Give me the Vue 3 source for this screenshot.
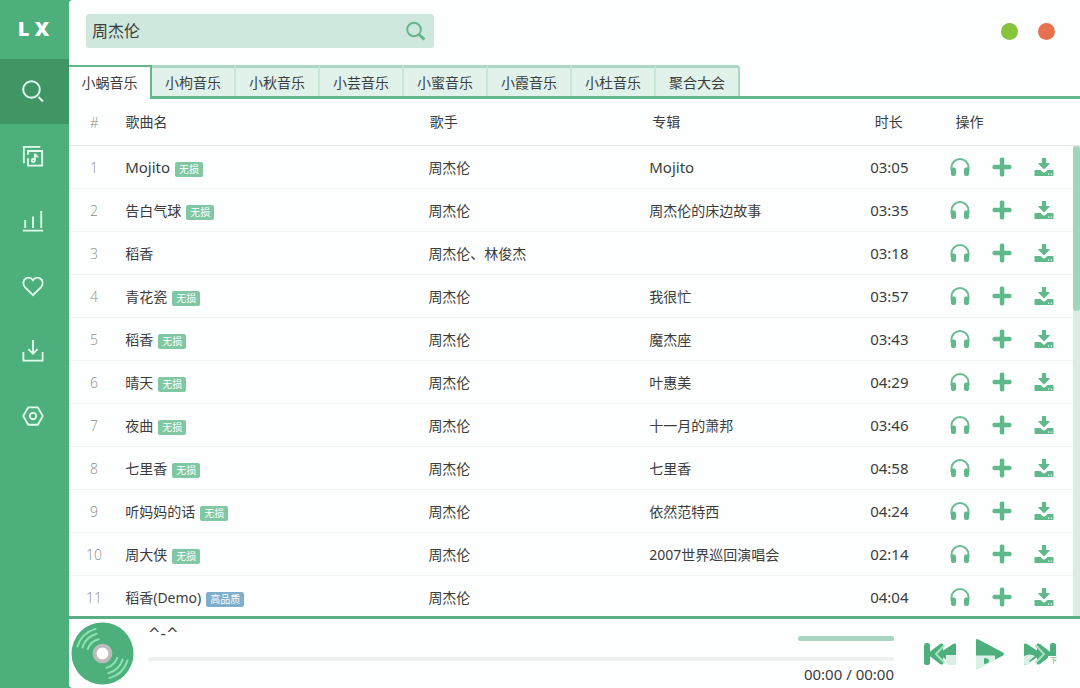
<script setup>
import { ref } from 'vue'

const keyword = ref('周杰伦')
const activeTab = ref(0)
const tabs = ['小蜗音乐', '小枸音乐', '小秋音乐', '小芸音乐', '小蜜音乐', '小霞音乐', '小杜音乐', '聚合大会']

const songs = [
  { name: 'Mojito', tag: '无损', artist: '周杰伦', album: 'Mojito', time: '03:05' },
  { name: '告白气球', tag: '无损', artist: '周杰伦', album: '周杰伦的床边故事', time: '03:35' },
  { name: '稻香', tag: '', artist: '周杰伦、林俊杰', album: '', time: '03:18' },
  { name: '青花瓷', tag: '无损', artist: '周杰伦', album: '我很忙', time: '03:57' },
  { name: '稻香', tag: '无损', artist: '周杰伦', album: '魔杰座', time: '03:43' },
  { name: '晴天', tag: '无损', artist: '周杰伦', album: '叶惠美', time: '04:29' },
  { name: '夜曲', tag: '无损', artist: '周杰伦', album: '十一月的萧邦', time: '03:46' },
  { name: '七里香', tag: '无损', artist: '周杰伦', album: '七里香', time: '04:58' },
  { name: '听妈妈的话', tag: '无损', artist: '周杰伦', album: '依然范特西', time: '04:24' },
  { name: '周大侠', tag: '无损', artist: '周杰伦', album: '2007世界巡回演唱会', time: '02:14' },
  { name: '稻香(Demo)', tag: '高品质', artist: '周杰伦', album: '', time: '04:04' },
]

const isLatin = (text) => /^[\w ]+$/.test(text)
</script>

<template>
  <div class="app">
    <aside class="side">
      <div class="logo">L X</div>
      <nav class="nav">
        <button class="nav-item active" aria-label="搜索">
          <svg viewBox="0 0 22 22"><circle cx="9.500" cy="9.500" r="8.300" /><path d="M16.500 17l4.500 4.500" /></svg>
        </button>
        <button class="nav-item" aria-label="歌单">
          <svg viewBox="0 0 24 24">
            <path d="M2 20V2h18M6.500 10.500V6.500h15.500v16H6.500v-8" />
            <path d="M14 17V9.500c.4 2 3 2 3 4" /><circle cx="12.300" cy="17" r="1.700" />
          </svg>
        </button>
        <button class="nav-item" aria-label="排行榜">
          <svg viewBox="0 0 24 24"><path d="M1 22.500h22M3.500 19.500V11M12 19.500V7M21 19.500V1" /></svg>
        </button>
        <button class="nav-item" aria-label="收藏">
          <svg viewBox="0 0 24 24"><path d="M12 22L3.400 13.500C.3 10.200 1.100 5.300 4.300 3.700C7.200 2.300 10.300 3.200 12 5.700C13.700 3.200 16.800 2.300 19.700 3.700C22.900 5.300 23.700 10.200 20.600 13.500Z" /></svg>
        </button>
        <button class="nav-item" aria-label="下载">
          <svg viewBox="0 0 24 24"><path d="M1.500 13v9.500h21V13M12 0v14M7 10L12 15l5-5" /></svg>
        </button>
        <button class="nav-item" aria-label="设置">
          <svg viewBox="0 0 24 24"><path d="M6.800 2.500h10.400L22.700 12l-5.500 9.500H6.800L1.300 12Z" /><circle cx="12" cy="12" r="3.500" /></svg>
        </button>
      </nav>
    </aside>

    <main class="main">
      <header class="toolbar">
        <form class="search" @submit.prevent>
          <input v-model="keyword" type="text" aria-label="搜索歌曲" />
          <button class="search-btn" aria-label="搜索">
            <svg viewBox="0 0 20 20"><circle cx="8" cy="8.500" r="6.800" /><path class="handle" d="M13 13.500l5.500 5" /></svg>
          </button>
        </form>
        <div class="window-btns">
          <button class="dot min" aria-label="最小化"></button>
          <button class="dot close" aria-label="关闭"></button>
        </div>
      </header>

      <div class="tabs">
        <button
          v-for="(tab, i) in tabs"
          :key="tab"
          class="tab"
          :class="{ active: i === activeTab }"
          @click="activeTab = i"
        >{{ tab }}</button>
      </div>

      <table class="head">
        <colgroup><col class="c-no" /><col class="c-name" /><col class="c-artist" /><col class="c-album" /><col class="c-time" /><col /></colgroup>
        <thead>
          <tr><th class="no">#</th><th>歌曲名</th><th>歌手</th><th>专辑</th><th>时长</th><th>操作</th></tr>
        </thead>
      </table>

      <div class="list">
        <div class="rows">
          <table>
            <colgroup><col class="c-no" /><col class="c-name" /><col class="c-artist" /><col class="c-album" /><col class="c-time" /><col /></colgroup>
            <tbody>
              <tr v-for="(s, i) in songs" :key="i">
                <td class="no">{{ i + 1 }}</td>
                <td><span :class="{ latin: isLatin(s.name) }">{{ s.name }}</span><span v-if="s.tag" class="tag" :class="{ hq: s.tag === '高品质' }">{{ s.tag }}</span></td>
                <td>{{ s.artist }}</td>
                <td :class="{ latin: isLatin(s.album) }">{{ s.album }}</td>
                <td class="latin">{{ s.time }}</td>
                <td>
                  <div class="actions">
                    <button aria-label="试听">
                      <svg viewBox="0 0 20 20">
                        <path class="band" d="M1.500 14V10.500a8.500 8.500 0 0 1 17 0V14" />
                        <rect x="1" y="10.500" width="5" height="8.500" rx="2" /><rect x="14" y="10.500" width="5" height="8.500" rx="2" />
                      </svg>
                    </button>
                    <button aria-label="添加">
                      <svg viewBox="0 0 20 20"><rect x="7.800" y="0.500" width="4.500" height="19" rx="1.800" /><rect x="0.500" y="7.800" width="19" height="4.500" rx="1.800" /></svg>
                    </button>
                    <button aria-label="下载">
                      <svg viewBox="0 0 20 20"><path fill-rule="evenodd" d="M8.500 1h3q.6 0 .6.600V6h3.200q.9 0 .3.700L10.500 12q-.5.500-1 0L4.400 6.700Q3.800 6 4.700 6H7.900V1.600Q7.900 1 8.500 1ZM1.300 13H6.500l2.200 2q1.300 1 2.600 0l2.200-2h5.200q.8 0 .8.800v4.400q0 .8-.8.800H1.300q-.8 0-.8-.8v-4.400q0-.8.8-.8ZM14 16.500v1.200h1.200v-1.200ZM16.700 16.500v1.200h1.200v-1.200Z" /></svg>
                    </button>
                  </div>
                </td>
              </tr>
            </tbody>
          </table>
        </div>
        <div class="track"><div class="thumb"></div></div>
      </div>

      <footer class="player">
        <svg class="disc" viewBox="0 0 64 64">
          <circle cx="32" cy="32" r="31.500" fill="#4daf7c" />
          <g fill="none" stroke="#8fe0b4" stroke-width="2" stroke-linecap="round">
            <path d="M6.500 25A27 27 0 0 1 25 7M11.500 26A21 21 0 0 1 26 12M17 27.500A16 16 0 0 1 28 17.500" />
            <path d="M57.500 39A27 27 0 0 1 39 57M52.500 38A21 21 0 0 1 38 52M47 36.500A16 16 0 0 1 36 46.500" />
          </g>
          <circle cx="32" cy="32" r="8" fill="#fff" stroke="#bcbcbc" stroke-width="4" />
        </svg>
        <div class="info">
          <div class="info-top"><span class="status">^-^</span><div class="volume"></div></div>
          <div class="progress"></div>
          <div class="clock">00:00 / 00:00</div>
        </div>
        <div class="controls">
          <button aria-label="上一首">
            <svg viewBox="0 0 34 32">
              <rect x="1" y="5" width="6" height="22" rx="2.500" />
              <path d="M20 6v20q-1 1-3 0L6 17.500q-1.500-1.500 0-3L17 6q2-1 3 0ZM33 6v20q-1 1-3 0L17 17.500q-1.500-1.500 0-3L30 6q2-1 3 0Z" />
              <path class="gap" d="M21.500 7l-8.500 9 8.500 9" />
              <path class="fade" d="M23 17h10v10h-7l-3-3Z" />
            </svg>
          </button>
          <button aria-label="播放">
            <svg viewBox="0 0 34 32">
              <path d="M3 2.500Q3 .5 5 1.300L30 14.500q2 1.500 0 3L5 30.700Q3 31.500 3 29.500Z" />
              <path class="fade" fill-rule="evenodd" d="M3 17.500H22V22L5 31q-2 .5-2-1.500ZM11 20v6q6-1 5-4-1-2-5-2Z" />
            </svg>
          </button>
          <button aria-label="下一首">
            <svg viewBox="0 0 34 32">
              <rect x="27" y="5" width="6" height="22" rx="2.500" />
              <path d="M14 6v20q1 1 3 0l11-8.500q1.500-1.500 0-3L17 6q-2-1-3 0ZM1 6v20q1 1 3 0l13-8.500q1.500-1.500 0-3L4 6q-2-1-3 0Z" />
              <path class="gap" d="M12.500 7l8.500 9-8.500 9" />
              <path class="fade" d="M1 18q6-3 11 0l-6 5 2 3H1Z" />
              <path class="cover" d="M25 18h9v10h-9Z" />
              <text x="27" y="25">下</text>
            </svg>
          </button>
        </div>
      </footer>
    </main>
  </div>
</template>

<style>
body {
  margin: 0;
}
</style>

<style scoped>
.app {
  display: flex;
  height: 100vh;
  overflow: hidden;
  background: #4daf7c;
  color: #3c3c3c;
  font-family: "Noto Sans", "Noto Sans CJK SC", sans-serif;
  font-size: 14px;
}
button {
  margin: 0;
  padding: 0;
  border: 0;
  background: none;
  color: inherit;
  font: inherit;
  cursor: pointer;
}
svg {
  display: block;
}
.side {
  flex: none;
  width: 69px;
}
.logo {
  height: 59px;
  padding-right: 2px;
  line-height: 58px;
  text-align: center;
  color: #fff;
  font-family: "Open Sans", sans-serif;
  font-size: 20px;
  font-weight: 800;
}
.nav {
  display: flex;
  flex-direction: column;
}
.nav-item {
  display: flex;
  align-items: center;
  justify-content: center;
  height: 65px;
  padding: 0 3px 2px 0;
}
.nav-item.active {
  background: #409565;
}
.nav-item svg {
  width: 22px;
  height: 22px;
  fill: none;
  stroke: #e2ffee;
  stroke-width: 2;
}
.main {
  display: flex;
  flex: 1;
  flex-direction: column;
  min-width: 0;
  border-radius: 4px 0 0 4px;
  background: #fdfffe;
  overflow: hidden;
}
.toolbar {
  display: flex;
  flex: none;
  align-items: center;
  justify-content: space-between;
  height: 62px;
  padding: 0 25px 0 17px;
}
.search {
  display: flex;
  align-items: center;
  width: 348px;
  height: 34px;
  border-radius: 3px;
  background: #cfe8dd;
}
.search input {
  flex: 1;
  min-width: 0;
  height: 34px;
  padding: 0 6px 2px;
  box-sizing: border-box;
  border: 0;
  outline: 0;
  background: none;
  color: #3c3c3c;
  font: inherit;
  font-size: 16px;
}
.search-btn {
  padding: 0 8px;
}
.search-btn svg {
  width: 20px;
  height: 20px;
  fill: none;
  stroke: #65b58b;
  stroke-width: 2;
}
.search-btn .handle {
  stroke-width: 3;
}
.window-btns {
  display: flex;
  gap: 20px;
}
.dot {
  width: 17px;
  height: 17px;
  border-radius: 50%;
}
.min {
  background: #85c43b;
}
.close {
  background: #e7704f;
}
.tabs {
  display: flex;
  flex: none;
  height: 34px;
  margin-top: 3px;
  box-shadow: inset 0 -3px #65b58b;
}
.tab {
  box-sizing: border-box;
  min-width: 84px;
  margin-bottom: 3px;
  border-top: 3px solid #a9d9c2;
  border-right: 2px solid #c6e6d8;
  background: #e1f2eb;
}
.tab:first-child {
  min-width: 83px;
}
.tab:last-child {
  border-right-color: #a9d9c2;
  border-top-right-radius: 3px;
}
.tab.active {
  margin-bottom: 0;
  padding-bottom: 3px;
  border-top: 2px solid #65b58b;
  border-right: 2px solid #65b58b;
  background: #fdfffe;
}
table {
  width: 100%;
  border-collapse: separate;
  border-spacing: 0;
  table-layout: fixed;
}
.c-no {
  width: 5%;
}
.c-name {
  width: 30%;
}
.c-artist,
.c-album {
  width: 22%;
}
.c-time {
  width: 8%;
}
th,
td {
  box-sizing: border-box;
  padding: 0 8px;
  text-align: left;
  font-weight: 400;
  white-space: nowrap;
}
th {
  padding: 0 7px 2px;
}
th:nth-child(2),
td:nth-child(2) {
  padding-left: 6px;
}
.head {
  flex: none;
}
th {
  height: 47px;
  border-bottom: 1px solid #e4e9e6;
}
td {
  height: 43px;
  border-bottom: 1px solid #f0f4f2;
}
.no {
  padding: 0;
  text-align: center;
  color: #8c8c8c;
  font-family: "Open Sans", sans-serif;
  font-weight: 300;
}
.latin {
  font-size: 15px;
}
.list {
  display: flex;
  flex: 1;
  min-height: 0;
}
.rows {
  flex: 1;
  overflow: hidden;
}
.track {
  flex: none;
  width: 7px;
  background: #dcece4;
}
.thumb {
  height: 35%;
  border-radius: 4px;
  background: #9fd5bb;
}
.tag {
  display: inline-block;
  margin-left: 5px;
  padding: 0 4px;
  border-radius: 2px;
  background: #7fc8a3;
  color: #fff;
  font-size: 10px;
  line-height: 15px;
  vertical-align: 0;
}
.tag.hq {
  background: #7daecb;
}
.actions {
  display: flex;
  gap: 22px;
}
.actions svg {
  width: 20px;
  height: 20px;
  fill: #5fb98b;
}
.actions .band {
  fill: none;
  stroke: #6dba94;
  stroke-width: 2;
}
.player {
  display: flex;
  flex: none;
  align-items: center;
  height: 69px;
  padding: 0 23px 0 2px;
  border-top: 3px solid #5bae84;
}
.disc {
  flex: none;
  width: 63px;
  height: 63px;
}
.info {
  flex: 1;
  margin: 0 29px 0 14px;
}
.info-top {
  display: flex;
  justify-content: space-between;
  height: 35px;
}
.status {
  font-family: "DejaVu Sans", sans-serif;
  font-size: 15px;
  line-height: 24px;
}
.volume {
  width: 96px;
  height: 5px;
  margin-top: 14px;
  border-radius: 2px;
  background: #a8d6be;
}
.progress {
  height: 4px;
  border-radius: 2px;
  background: #eff1f0;
}
.clock {
  margin-top: 2px;
  text-align: right;
  font-size: 15px;
  line-height: 22px;
}
.controls {
  display: flex;
  gap: 16px;
}
.controls svg {
  width: 34px;
  height: 32px;
  fill: #4daf7c;
}
.controls .gap {
  fill: none;
  stroke: #a4e2c1;
  stroke-width: 2;
}
.controls .fade {
  fill: #d9f1e4;
}
.controls .cover {
  fill: #fdfffe;
}
.controls text {
  font-size: 7px;
}
</style>
